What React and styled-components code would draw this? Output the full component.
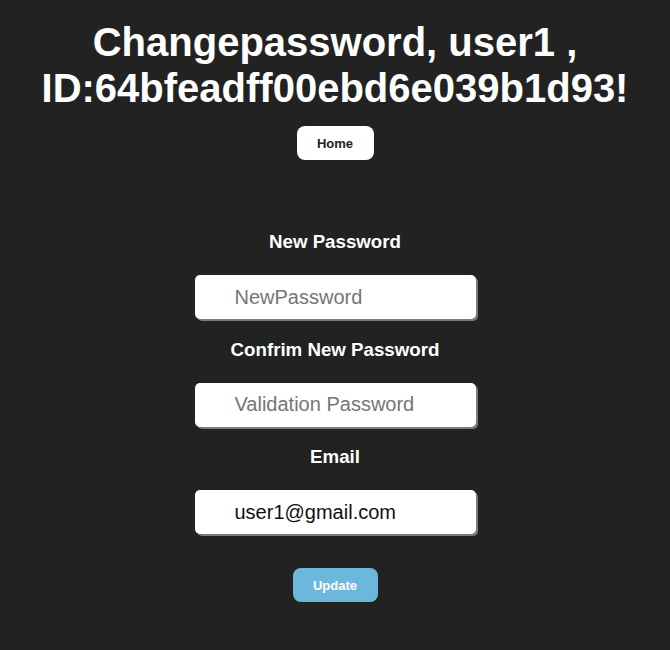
import React, { useState } from "react";
import styled, { createGlobalStyle } from "styled-components";

const GlobalStyle = createGlobalStyle`
  body {
    margin: 0;
    background: #222222;
    font-family: "Liberation Sans", Arial, sans-serif;
  }
`;

const Page = styled.div`
  display: flex;
  flex-direction: column;
  align-items: center;
  padding-top: 19px;
  color: #ffffff;
`;

const Title = styled.h1`
  margin: 0;
  font-size: 40px;
  line-height: 46px;
  font-weight: bold;
  text-align: center;
`;

const Button = styled.button`
  width: ${(p) => p.$width}px;
  height: 34px;
  margin-top: ${(p) => p.$top}px;
  border: none;
  border-radius: 8px;
  background: ${(p) => p.$bg};
  color: ${(p) => p.$color};
  font-family: "Liberation Sans", Arial, sans-serif;
  font-size: 13px;
  font-weight: bold;
  cursor: pointer;
`;

const Form = styled.form`
  display: flex;
  flex-direction: column;
  align-items: center;
  margin-top: 71px;
`;

const Label = styled.h3`
  margin: ${(p) => p.$top}px 0 0;
  font-size: 18.72px;
  line-height: 21px;
  font-weight: bold;
`;

const Input = styled.input`
  box-sizing: border-box;
  width: 281px;
  height: 44px;
  margin-top: 23px;
  padding: 0 0 0 40px;
  border: none;
  border-radius: 5px;
  box-shadow: 2px 2px 0 #7a7a7a;
  background: #ffffff;
  color: #111111;
  font-family: "Liberation Sans", Arial, sans-serif;
  font-size: 20px;
  outline: none;

  &::placeholder {
    color: #757575;
  }
`;

export default function App() {
  const [password, setPassword] = useState("");
  const [confirm, setConfirm] = useState("");
  const [email, setEmail] = useState("user1@gmail.com");

  return (
    <>
      <GlobalStyle />
      <Page>
        <Title>
          Changepassword, user1 ,
          <br />
          ID:64bfeadff00ebd6e039b1d93!
        </Title>
        <Button $width={77} $top={15} $bg="#ffffff" $color="#222222">
          Home
        </Button>
        <Form onSubmit={(e) => e.preventDefault()}>
          <Label $top={0}>New Password</Label>
          <Input
            type="password"
            placeholder="NewPassword"
            value={password}
            onChange={(e) => setPassword(e.target.value)}
          />
          <Label $top={19.5}>Confrim New Password</Label>
          <Input
            type="password"
            placeholder="Validation Password"
            value={confirm}
            onChange={(e) => setConfirm(e.target.value)}
          />
          <Label $top={19.5}>Email</Label>
          <Input
            type="email"
            value={email}
            onChange={(e) => setEmail(e.target.value)}
          />
          <Button $width={85} $top={34} $bg="#6cb8dc" $color="#ffffff" type="submit">
            Update
          </Button>
        </Form>
      </Page>
    </>
  );
}
